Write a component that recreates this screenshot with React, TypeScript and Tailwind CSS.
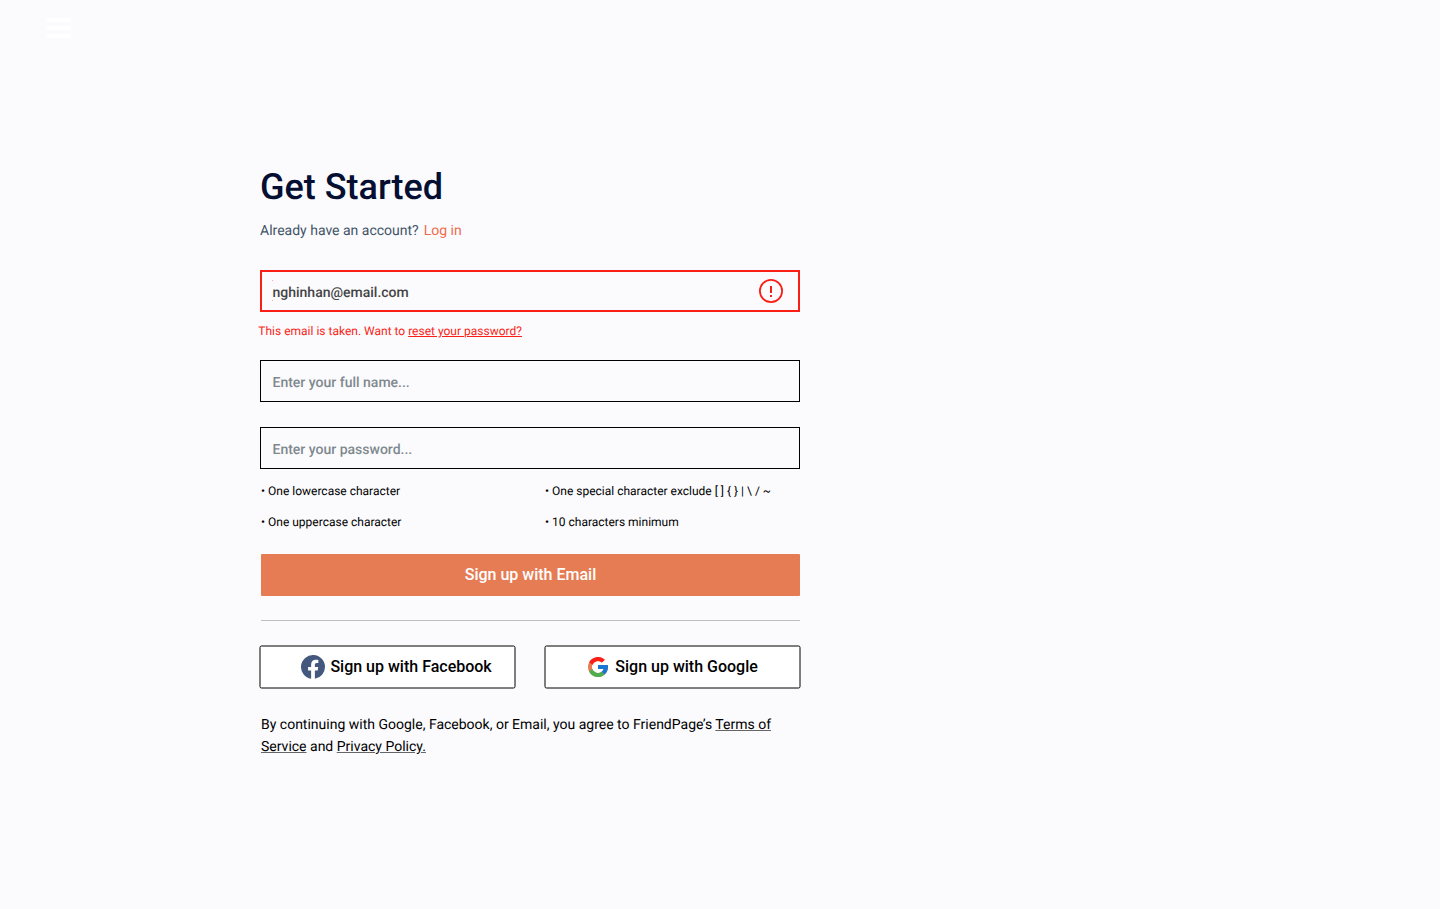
import React from "react";

function FacebookIcon() {
  return (
    <svg width="24" height="24" viewBox="0 0 24 24" className="relative shrink-0">
      <path
        fill="#43587c"
        d="M24 12a12 12 0 1 0-13.875 11.854v-8.385H7.078V12h3.047V9.356c0-3.007 1.792-4.668 4.533-4.668 1.312 0 2.686.234 2.686.234v2.953H15.83c-1.491 0-1.956.925-1.956 1.874V12h3.328l-.532 3.469h-2.796v8.385A12 12 0 0 0 24 12z"
      />
    </svg>
  );
}

function GoogleIcon() {
  return (
    <svg width="20" height="20" viewBox="4 4 40 40" className="relative shrink-0">
      <path fill="#e57c54" d="M43.6 20.1H42V20H24v8h11.3c-1.6 4.7-6.1 8-11.3 8a12 12 0 1 1 7.9-21l5.7-5.7A20 20 0 1 0 43.6 20.1z" />
      <path fill="#f91f17" d="m6.3 14.7 6.6 4.8A12 12 0 0 1 31.9 15l5.7-5.7A20 20 0 0 0 6.3 14.7z" />
      <path fill="#4caf50" d="M24 44c5.2 0 9.9-2 13.4-5.2l-6.2-5.2A11.9 11.9 0 0 1 12.7 28l-6.5 5A20 20 0 0 0 24 44z" />
      <path fill="#1976d2" d="M43.6 20.1H42V20H24v8h11.3a12 12 0 0 1-4.1 5.6l6.2 5.2C37 39.2 44 34 44 24c0-1.3-.1-2.6-.4-3.9z" />
    </svg>
  );
}

function AlertIcon() {
  return (
    <svg width="24" height="24" viewBox="0 0 24 24" fill="none" className="shrink-0">
      <circle cx="12" cy="12" r="11.1" stroke="#f91f17" strokeWidth="1.8" />
      <path d="M11 7h2v7h-2zM11 16h2v2h-2z" fill="#f91f17" />
    </svg>
  );
}

function Field({ text }: { text: string }) {
  return (
    <div className="flex h-[42px] items-center border border-black pl-[11.5px] text-[14px] font-medium leading-5 text-[#7f898e]">
      <span className="pt-1">{text}</span>
    </div>
  );
}

function SocialButton({ icon, label }: { icon: React.ReactNode; label: string }) {
  return (
    <button className="relative flex h-11 w-[257px] items-center text-[16px] font-medium text-black before:absolute before:left-0 before:top-0 before:h-[43px] before:w-[256px] before:translate-x-[0.5px] before:translate-y-[0.5px] before:rounded-[2px] before:border before:border-black before:bg-white before:content-['']">
      {icon}
      <span className="relative whitespace-nowrap">{label}</span>
    </button>
  );
}

export default function App() {
  return (
    <div className="min-h-[909px] w-full bg-[#fbfbfe] font-['Roboto',sans-serif] [text-rendering:geometricPrecision]">
      <header className="flex h-[160px] flex-col gap-1 pl-[47px] pt-[18px]">
        <span className="h-1 w-6 rounded-[1px] bg-white" />
        <span className="h-1 w-6 rounded-[1px] bg-white" />
        <span className="h-1 w-6 rounded-[1px] bg-white" />
      </header>

      <main className="ml-[260px] flex w-[541px] flex-col">
        <h1 className="h-[54px] whitespace-nowrap text-[36px] font-medium leading-[54px] text-[#050f32]">Get Started</h1>
        <p className="mt-[7px] h-5 whitespace-nowrap text-[14px] leading-5 text-[#425466]">
          Already have an account?<a className="ml-[5px] text-[#ef6b4a]">Log in</a>
        </p>

        <section className="mt-[29px] w-[540px]">
          <div className="flex h-[42px] items-center justify-between border-2 border-[#f91f17] pl-[10px] pr-[15px]">
            <span className="relative pl-[0.5px] pt-1 text-[14px] font-medium leading-5 text-[#444]">
              nghinhan@email.com
              <i className="absolute left-0 top-px h-px w-px bg-[#fba9a5]" />
              <i className="absolute left-0 top-[21px] h-px w-px bg-[#fba9a5]" />
            </span>
            <AlertIcon />
          </div>
          <p className="-ml-0.5 mt-[9px] h-5 whitespace-nowrap pl-[0.3px] text-[12px] leading-5 text-[#f91f17]">
            This email is taken. Want to <a className="underline">reset your password?</a>
          </p>
          <div className="mt-[19px] flex flex-col gap-[25px]">
            <Field text="Enter your full name..." />
            <Field text="Enter your password..." />
          </div>
          <ul className="ml-px mt-3 grid grid-cols-[284px_1fr] gap-y-[11px] whitespace-nowrap text-[12px] leading-5 text-black">
            <li>• One lowercase character</li>
            <li>• One special character exclude [ ] {"{ }"} | \ / ~</li>
            <li>• One uppercase character</li>
            <li>• 10 characters minimum</li>
          </ul>
          <button className="ml-px mt-[22px] flex h-[42px] w-[539px] items-center justify-center rounded-[1px] bg-[#e57c54] text-[16px] font-medium text-white">
            Sign up with Email
          </button>
          <div className="ml-px mt-6 h-px bg-[#bfbfc1]" />
        </section>

        <div className="-ml-px mt-6 flex gap-7">
          <div className="[&>button]:gap-[5.4px] [&>button]:pl-[42px]">
            <SocialButton icon={<FacebookIcon />} label="Sign up with Facebook" />
          </div>
          <div className="[&>button]:gap-[7.3px] [&>button]:pl-[44px]">
            <SocialButton icon={<GoogleIcon />} label="Sign up with Google" />
          </div>
        </div>

        <p className="ml-px mt-[25px] whitespace-nowrap text-[14px] leading-[22px] text-black">
          By continuing with Google, Facebook, or Email, you agree to FriendPage’s{" "}
          <a className="underline decoration-[#666]">Terms of</a>
          <br />
          <a className="underline decoration-[#666]">Service</a> and{" "}
          <a className="underline decoration-[#666]">Privacy Policy.</a>
        </p>
      </main>
    </div>
  );
}
